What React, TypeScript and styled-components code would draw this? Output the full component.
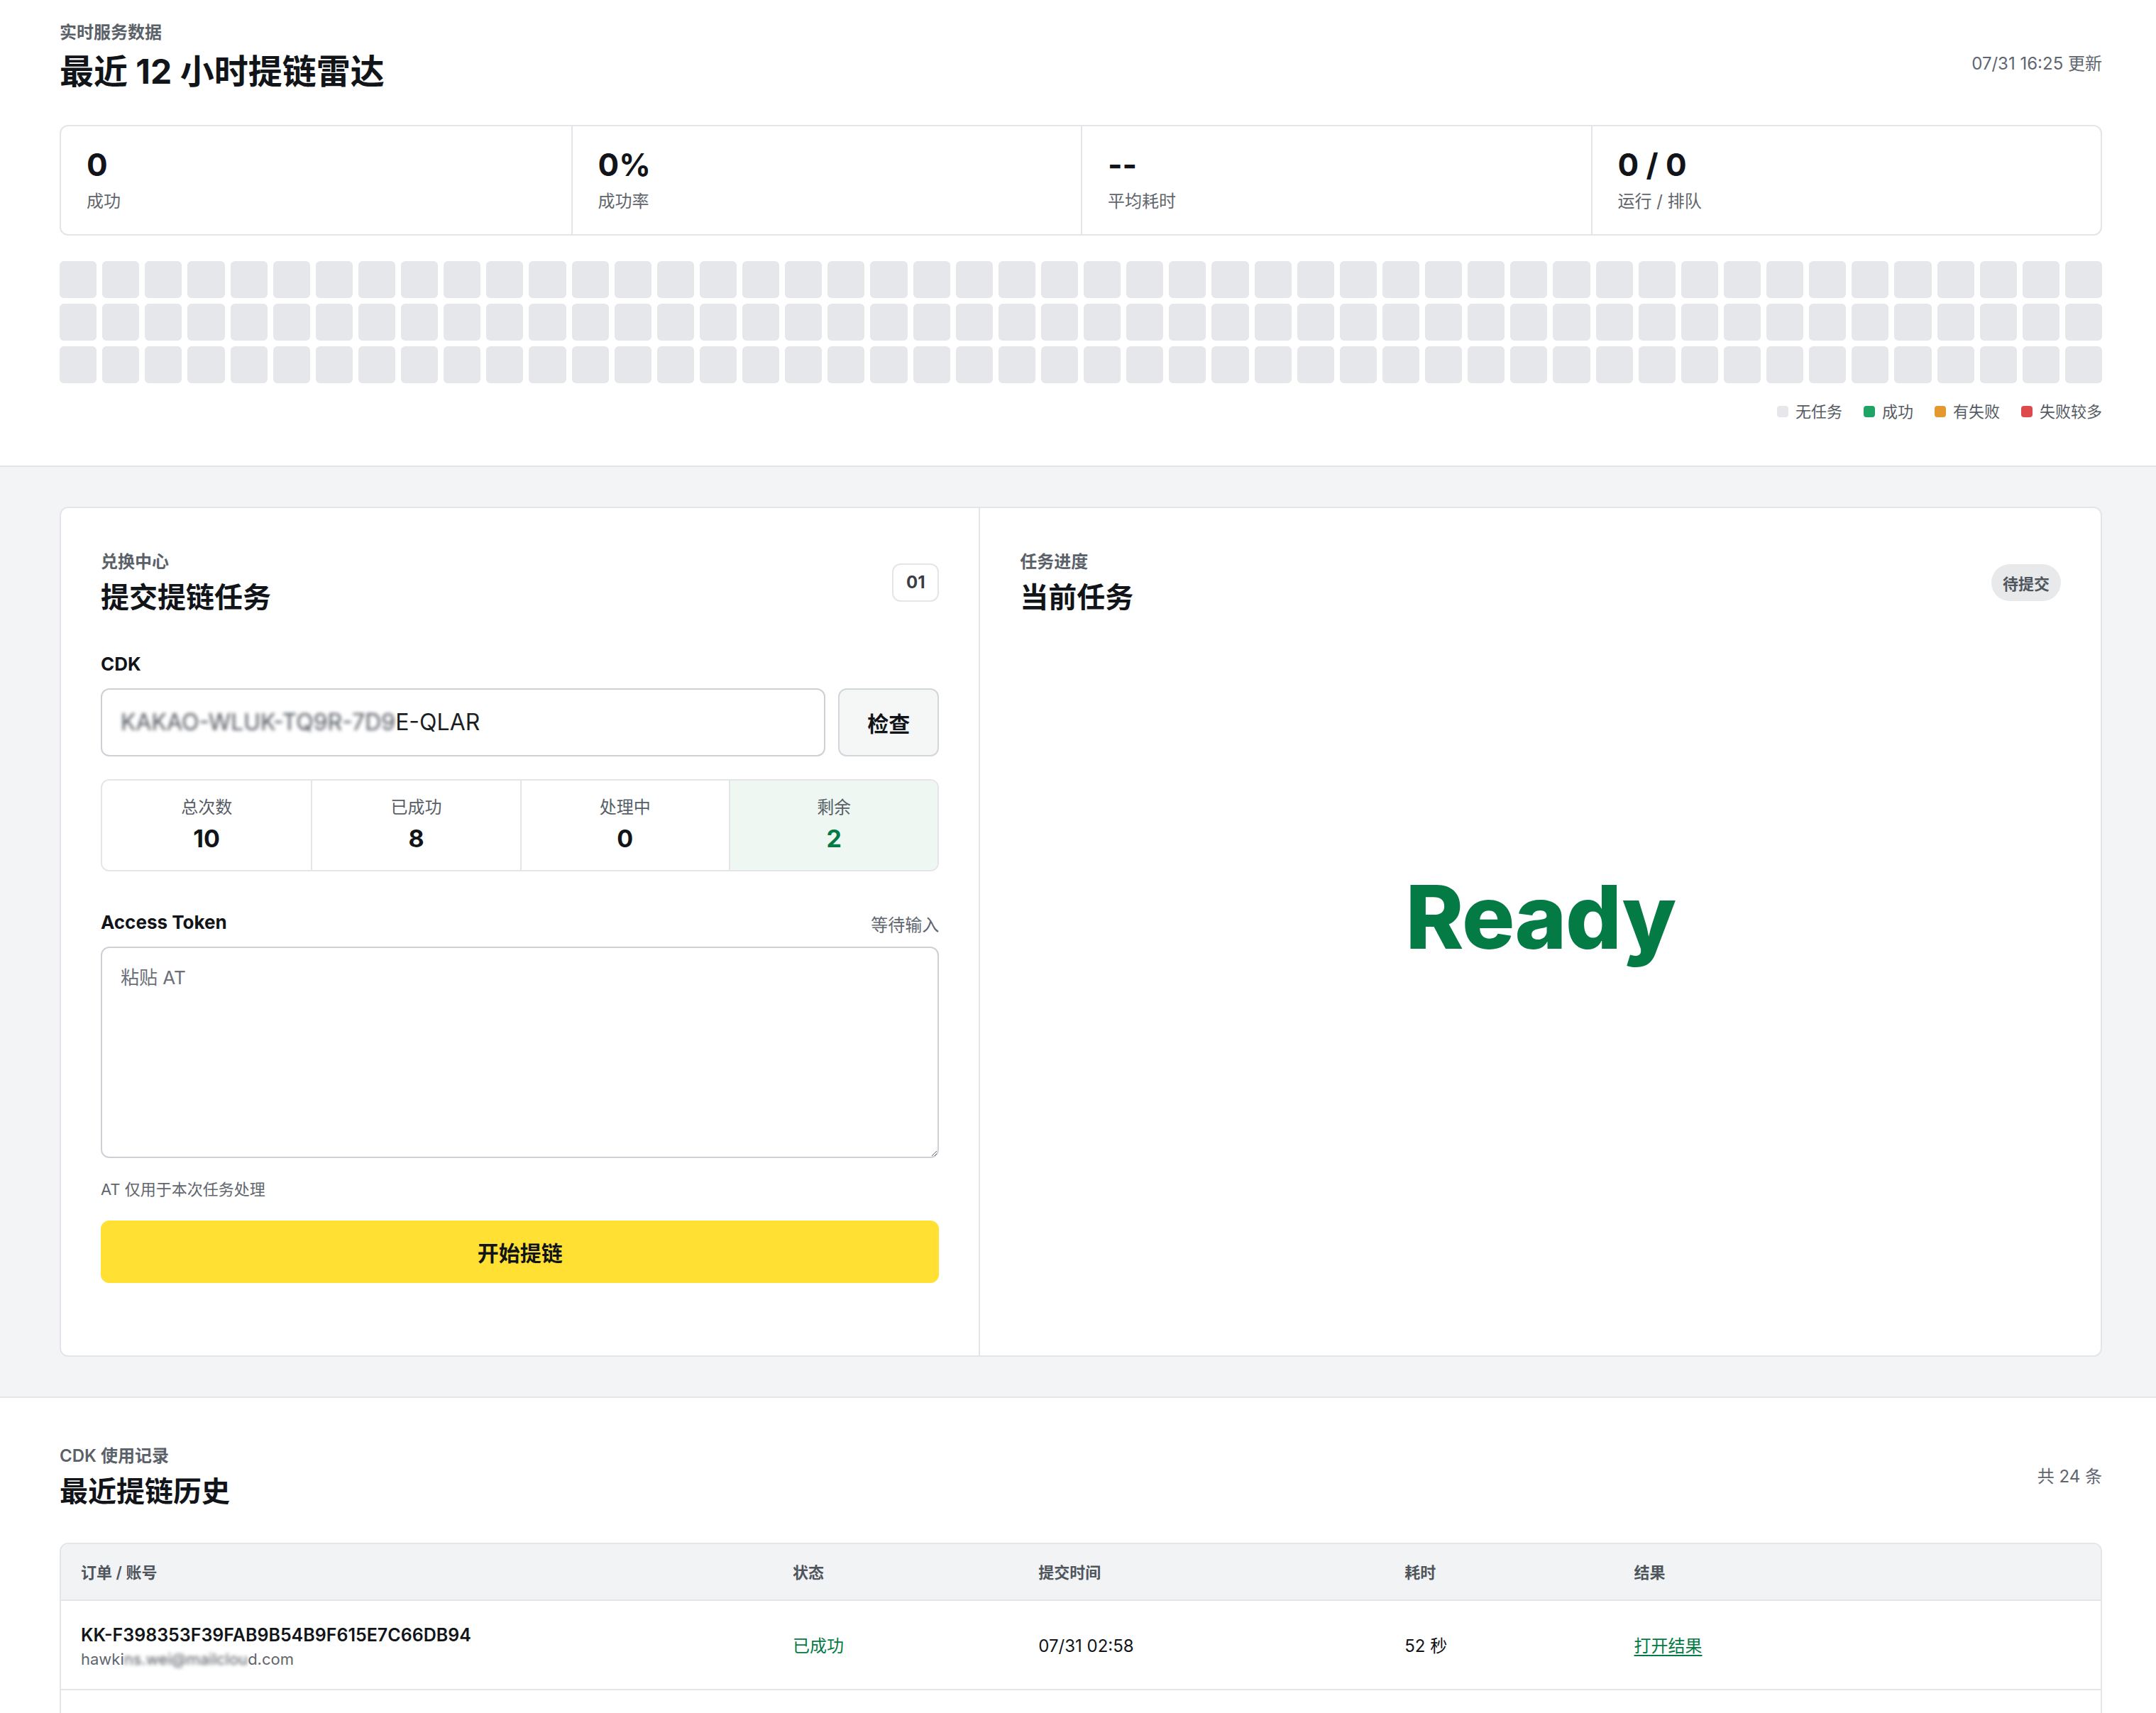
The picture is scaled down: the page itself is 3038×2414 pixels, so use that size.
import React from "react";
import styled, { createGlobalStyle } from "styled-components";

const FONT = `"Inter", "Noto Sans CJK SC", sans-serif`;
const LINE = "#e3e5e8";
const FIELD_LINE = "#cdd1d6";
const GREEN = "#047a45";
const MUTED = "#5b6169";

const cellColors = {
  idle: "#e5e7eb",
  ok: "#1fa463",
  partial: "#e3992e",
  bad: "#dc4a4e",
};

type CellState = keyof typeof cellColors;

const GlobalStyle = createGlobalStyle`
  html, body {
    margin: 0;
    padding: 0;
    background: #ffffff;
  }
  body {
    zoom: 2;
    font-family: ${FONT};
    color: #111418;
    -webkit-font-smoothing: antialiased;
  }
  * {
    box-sizing: border-box;
  }
`;

const RadarSection = styled.section`
  background: #ffffff;
  padding: 15px 38px 30px 42px;
`;

const WorkSection = styled.section`
  background: #f3f4f6;
  border-top: 1px solid ${LINE};
  border-bottom: 1px solid ${LINE};
  padding: 28px 38px 28px 42px;
`;

const HistorySection = styled.section`
  background: #ffffff;
  padding: 33px 38px 40px 42px;
`;

const SectionHead = styled.div`
  display: flex;
  justify-content: space-between;
  align-items: center;
`;

const Eyebrow = styled.div`
  font-size: 12px;
  line-height: 16px;
  font-weight: 600;
  color: ${MUTED};
`;

const PageTitle = styled.h1<{ $size?: number }>`
  margin: 5px 0 0;
  font-size: ${(p) => p.$size ?? 24}px;
  line-height: 1.2;
  font-weight: 700;
  color: #111418;
`;

const MetaText = styled.div<{ $shift?: number }>`
  font-size: 12px;
  line-height: 18px;
  color: #5f6670;
  margin-top: ${(p) => p.$shift ?? 0}px;
`;

const StatsStrip = styled.div`
  margin-top: 23px;
  display: grid;
  grid-template-columns: repeat(4, 1fr);
  border: 1px solid ${LINE};
  border-radius: 6px;
`;

const StatCell = styled.div`
  padding: 14px 18px;

  & + & {
    border-left: 1px solid ${LINE};
  }
`;

const StatValue = styled.div`
  font-size: 22px;
  line-height: 26px;
  font-weight: 700;
  color: #111418;
`;

const StatLabel = styled.div`
  margin-top: 4px;
  font-size: 12px;
  line-height: 18px;
  color: #61666d;
`;

const HeatGrid = styled.div`
  margin-top: 18px;
  display: grid;
  grid-template-columns: repeat(48, 1fr);
  gap: 4px;
`;

const HeatCell = styled.div<{ $state: CellState }>`
  height: 26px;
  border-radius: 3px;
  background: ${(p) => cellColors[p.$state]};
`;

const Legend = styled.div`
  margin-top: 12px;
  display: flex;
  justify-content: flex-end;
  gap: 15px;
`;

const LegendItem = styled.div`
  display: flex;
  align-items: center;
  gap: 5px;
  font-size: 11px;
  line-height: 16px;
  color: #555b63;
`;

const Swatch = styled.span<{ $state: CellState }>`
  width: 8px;
  height: 8px;
  border-radius: 2px;
  background: ${(p) => cellColors[p.$state]};
`;

const WorkCard = styled.div`
  display: grid;
  grid-template-columns: 9fr 11fr;
  min-height: 599px;
  background: #ffffff;
  border: 1px solid ${LINE};
  border-radius: 6px;
`;

const Panel = styled.div`
  display: flex;
  flex-direction: column;
  padding: 30px 28px;

  & + & {
    border-left: 1px solid ${LINE};
  }
`;

const StepBadge = styled.div`
  width: 33px;
  height: 27px;
  display: flex;
  align-items: center;
  justify-content: center;
  border: 1px solid ${LINE};
  border-radius: 6px;
  font-size: 12px;
  font-weight: 700;
  color: #3a3f46;
`;

const StatusPill = styled.div`
  height: 26px;
  padding: 0 8px;
  display: flex;
  align-items: center;
  border-radius: 13px;
  background: #e8e9eb;
  font-size: 11px;
  font-weight: 600;
  color: #50565e;
`;

const FieldGroup = styled.div<{ $gap?: number }>`
  margin-top: ${(p) => p.$gap ?? 24}px;
`;

const FieldRow = styled.div`
  display: flex;
  justify-content: space-between;
  align-items: flex-end;
  margin-bottom: 8px;
`;

const FieldLabel = styled.label`
  display: block;
  font-size: 13px;
  line-height: 18px;
  font-weight: 700;
  color: #111418;
`;

const FieldState = styled.span`
  font-size: 12px;
  line-height: 14px;
  color: #5f6670;
`;

const InputRow = styled.div`
  margin-top: 8px;
  display: flex;
  gap: 9px;
`;

const CodeBox = styled.div`
  flex: 1;
  height: 48px;
  display: flex;
  align-items: center;
  padding: 0 13px;
  border: 1px solid ${FIELD_LINE};
  border-radius: 6px;
  font-size: 16px;
  color: #1b1f24;
`;

const Masked = styled.span`
  filter: blur(1.4px);
  color: #50555c;
`;

const CheckButton = styled.button`
  width: 71px;
  height: 48px;
  border: 1px solid #d3d6da;
  border-radius: 6px;
  background: #f5f6f6;
  font-family: ${FONT};
  font-size: 15px;
  font-weight: 700;
  color: #111418;
`;

const QuotaGrid = styled.div`
  margin-top: 16px;
  display: grid;
  grid-template-columns: repeat(4, 1fr);
  border: 1px solid ${LINE};
  border-radius: 6px;
  overflow: hidden;
`;

const QuotaCell = styled.div<{ $highlight?: boolean }>`
  padding: 11px 0;
  text-align: center;
  background: ${(p) => (p.$highlight ? "#eef7f2" : "#ffffff")};

  & + & {
    border-left: 1px solid ${LINE};
  }
`;

const QuotaLabel = styled.div`
  font-size: 12px;
  line-height: 16px;
  color: #585e66;
`;

const QuotaValue = styled.div<{ $highlight?: boolean }>`
  margin-top: 3px;
  font-size: 17px;
  line-height: 22px;
  font-weight: 700;
  color: ${(p) => (p.$highlight ? GREEN : "#111418")};
`;

const TokenArea = styled.textarea`
  display: block;
  width: 100%;
  height: 149px;
  padding: 12px 13px;
  border: 1px solid ${FIELD_LINE};
  border-radius: 6px;
  resize: vertical;
  font-family: ${FONT};
  font-size: 13px;
  line-height: 18px;
  color: #111418;

  &::placeholder {
    color: #6b7078;
  }
`;

const Hint = styled.div`
  margin-top: 14px;
  font-size: 11px;
  line-height: 16px;
  color: #61666d;
`;

const SubmitButton = styled.button`
  margin-top: 14px;
  height: 44px;
  width: 100%;
  border: none;
  border-radius: 6px;
  background: #ffe033;
  font-family: ${FONT};
  font-size: 15px;
  font-weight: 700;
  color: #111418;
`;

const ReadyStage = styled.div`
  flex: 1;
  display: flex;
  align-items: center;
  justify-content: center;
  padding-bottom: 66px;
`;

const ReadyText = styled.div`
  font-size: 62px;
  line-height: 1;
  font-weight: 800;
  letter-spacing: -0.01em;
  color: ${GREEN};
`;

const TableFrame = styled.div`
  margin-top: 24px;
  border: 1px solid ${LINE};
  border-radius: 6px;
  overflow: hidden;
`;

const Table = styled.table`
  width: 100%;
  border-collapse: collapse;
  table-layout: fixed;
`;

const Th = styled.th`
  padding: 12px 14px 11px;
  background: #f2f3f5;
  border-bottom: 1px solid ${LINE};
  text-align: left;
  font-size: 11px;
  line-height: 16px;
  font-weight: 600;
  color: #4f555d;
`;

const Td = styled.td<{ $tone?: "ok" }>`
  padding: 15px 14px 13px;
  border-bottom: 1px solid ${LINE};
  font-size: 12px;
  line-height: 18px;
  color: ${(p) => (p.$tone === "ok" ? GREEN : "#111418")};
  vertical-align: middle;
`;

const OrderId = styled.div`
  font-size: 12.5px;
  line-height: 18px;
  font-weight: 600;
  color: #111418;
`;

const Account = styled.div`
  font-size: 11px;
  line-height: 16px;
  color: #61666d;
`;

const ResultLink = styled.a`
  color: ${GREEN};
  text-decoration: underline;
  text-underline-offset: 2px;
`;

const stats = [
  { value: "0", label: "成功" },
  { value: "0%", label: "成功率" },
  { value: "--", label: "平均耗时" },
  { value: "0 / 0", label: "运行 / 排队" },
];

const legend: { state: CellState; label: string }[] = [
  { state: "idle", label: "无任务" },
  { state: "ok", label: "成功" },
  { state: "partial", label: "有失败" },
  { state: "bad", label: "失败较多" },
];

const quota = [
  { label: "总次数", value: "10" },
  { label: "已成功", value: "8" },
  { label: "处理中", value: "0" },
  { label: "剩余", value: "2", highlight: true },
];

const columns = [
  { title: "订单 / 账号", width: "34.9%" },
  { title: "状态", width: "12.05%" },
  { title: "提交时间", width: "17.95%" },
  { title: "耗时", width: "11.25%" },
  { title: "结果", width: "23.85%" },
];

const history = [
  {
    id: "KK-F398353F39FAB9B54B9F615E7C66DB94",
    head: "hawki",
    hidden: "ns.wei@mailclou",
    tail: "d.com",
    status: "已成功",
    time: "07/31 02:58",
    cost: "52 秒",
  },
  {
    id: "KK-A0C71E5D82B94F3E9D1C6B7A4E2F8D10",
    head: "hawki",
    hidden: "ns.wei@mailclou",
    tail: "d.com",
    status: "已成功",
    time: "07/31 01:12",
    cost: "47 秒",
  },
];

const heatCells: CellState[] = Array.from({ length: 144 }, () => "idle");

export default function App() {
  return (
    <>
      <GlobalStyle />
      <RadarSection>
        <SectionHead>
          <div>
            <Eyebrow>实时服务数据</Eyebrow>
            <PageTitle>最近 12 小时提链雷达</PageTitle>
          </div>
          <MetaText $shift={10}>07/31 16:25 更新</MetaText>
        </SectionHead>

        <StatsStrip>
          {stats.map((s) => (
            <StatCell key={s.label}>
              <StatValue>{s.value}</StatValue>
              <StatLabel>{s.label}</StatLabel>
            </StatCell>
          ))}
        </StatsStrip>

        <HeatGrid>
          {heatCells.map((state, i) => (
            <HeatCell key={i} $state={state} />
          ))}
        </HeatGrid>

        <Legend>
          {legend.map((l) => (
            <LegendItem key={l.label}>
              <Swatch $state={l.state} />
              {l.label}
            </LegendItem>
          ))}
        </Legend>
      </RadarSection>

      <WorkSection>
        <WorkCard>
          <Panel>
            <SectionHead>
              <div>
                <Eyebrow>兑换中心</Eyebrow>
                <PageTitle $size={20}>提交提链任务</PageTitle>
              </div>
              <StepBadge>01</StepBadge>
            </SectionHead>

            <FieldGroup $gap={26}>
              <FieldLabel>CDK</FieldLabel>
              <InputRow>
                <CodeBox>
                  <Masked>KAKAO-WLUK-TQ9R-7D9</Masked>
                  E-QLAR
                </CodeBox>
                <CheckButton>检查</CheckButton>
              </InputRow>
              <QuotaGrid>
                {quota.map((q) => (
                  <QuotaCell key={q.label} $highlight={q.highlight}>
                    <QuotaLabel>{q.label}</QuotaLabel>
                    <QuotaValue $highlight={q.highlight}>{q.value}</QuotaValue>
                  </QuotaCell>
                ))}
              </QuotaGrid>
            </FieldGroup>

            <FieldGroup $gap={27}>
              <FieldRow>
                <FieldLabel>Access Token</FieldLabel>
                <FieldState>等待输入</FieldState>
              </FieldRow>
              <TokenArea placeholder="粘贴 AT" />
              <Hint>AT 仅用于本次任务处理</Hint>
              <SubmitButton>开始提链</SubmitButton>
            </FieldGroup>
          </Panel>

          <Panel>
            <SectionHead>
              <div>
                <Eyebrow>任务进度</Eyebrow>
                <PageTitle $size={20}>当前任务</PageTitle>
              </div>
              <StatusPill>待提交</StatusPill>
            </SectionHead>
            <ReadyStage>
              <ReadyText>Ready</ReadyText>
            </ReadyStage>
          </Panel>
        </WorkCard>
      </WorkSection>

      <HistorySection>
        <SectionHead>
          <div>
            <Eyebrow>CDK 使用记录</Eyebrow>
            <PageTitle $size={20}>最近提链历史</PageTitle>
          </div>
          <MetaText>共 24 条</MetaText>
        </SectionHead>

        <TableFrame>
          <Table>
            <colgroup>
              {columns.map((c) => (
                <col key={c.title} style={{ width: c.width }} />
              ))}
            </colgroup>
            <thead>
              <tr>
                {columns.map((c) => (
                  <Th key={c.title}>{c.title}</Th>
                ))}
              </tr>
            </thead>
            <tbody>
              {history.map((h) => (
                <tr key={h.id}>
                  <Td>
                    <OrderId>{h.id}</OrderId>
                    <Account>
                      {h.head}
                      <Masked>{h.hidden}</Masked>
                      {h.tail}
                    </Account>
                  </Td>
                  <Td $tone="ok">{h.status}</Td>
                  <Td>{h.time}</Td>
                  <Td>{h.cost}</Td>
                  <Td>
                    <ResultLink href="#">打开结果</ResultLink>
                  </Td>
                </tr>
              ))}
            </tbody>
          </Table>
        </TableFrame>
      </HistorySection>
    </>
  );
}
